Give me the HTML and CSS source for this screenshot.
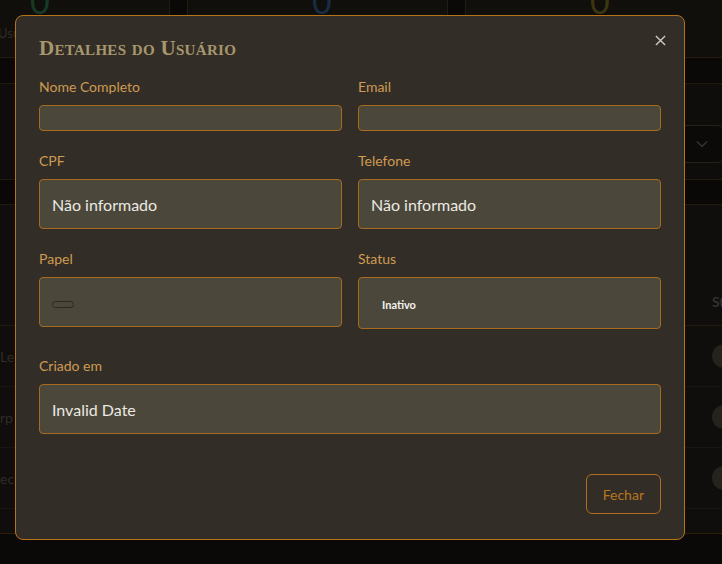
FILE: index.html
```html
<!DOCTYPE html>
<html lang="pt-BR">
<head>
<meta charset="utf-8">
<title>Detalhes do Usuário</title>
<link rel="stylesheet" href="styles.css">
</head>
<body>
<div class="page">
  <div class="stats">
    <div class="stat stat-a">
      <div class="num green">0</div>
      <div class="stat-label">Usuários</div>
    </div>
    <div class="stat stat-b">
      <div class="num blue">0</div>
    </div>
    <div class="stat stat-c">
      <div class="num olive">0</div>
    </div>
  </div>
  <div class="filters">
    <div class="select"><svg width="12" height="8" viewBox="0 0 12 8"><path d="M1 1.5l5 5 5-5" fill="none" stroke="#3a362e" stroke-width="1.4"/></svg></div>
  </div>
  <div class="band"></div>
  <div class="table">
    <div class="thead"><span class="th">Status</span></div>
    <div class="tr"><span class="td">Le</span><span class="dot"></span></div>
    <div class="tr"><span class="td">rp</span><span class="dot"></span></div>
    <div class="tr"><span class="td">ec</span><span class="dot"></span></div>
  </div>
</div>

<div class="overlay">
  <div class="modal">
    <button class="close" aria-label="Fechar">
      <svg width="12" height="12" viewBox="0 0 12 12"><path d="M1 1l10 10M11 1L1 11" stroke="#cfcac0" stroke-width="1.5" fill="none"/></svg>
    </button>
    <h2 class="title">Detalhes do Usuário</h2>
    <div class="grid">
      <div class="field">
        <label class="label">Nome Completo</label>
        <div class="box"></div>
      </div>
      <div class="field">
        <label class="label">Email</label>
        <div class="box"></div>
      </div>
      <div class="field">
        <label class="label">CPF</label>
        <div class="box">Não informado</div>
      </div>
      <div class="field">
        <label class="label">Telefone</label>
        <div class="box">Não informado</div>
      </div>
      <div class="field">
        <label class="label">Papel</label>
        <div class="box"><span class="badge badge-empty"></span></div>
      </div>
      <div class="field">
        <label class="label">Status</label>
        <div class="box"><span class="badge badge-status">Inativo</span></div>
      </div>
    </div>
    <div class="field field-wide">
      <label class="label">Criado em</label>
      <div class="box">Invalid Date</div>
    </div>
    <div class="footer">
      <button class="btn">Fechar</button>
    </div>
  </div>
</div>
</body>
</html>
```

FILE: styles.css
```css
* { box-sizing: border-box; }
html, body { margin: 0; padding: 0; }
body {
  background: #0a0908;
  font-family: Lato, "Noto Sans", sans-serif;
  width: 722px;
  height: 564px;
  overflow: hidden;
}

/* background dashboard (dimmed) */
.page { display: flex; flex-direction: column; }
.stats {
  display: flex;
  gap: 17px;
  height: 58px;
  overflow: hidden;
}
.stat {
  background: #100f0c;
  border: 1px solid #241c0e;
  border-top: none;
  display: flex;
  flex-direction: column;
}
.stat-a { width: 170px; padding-left: 30px; border-left: none; }
.stat-b { width: 261px; padding-left: 124px; }
.stat-c { flex: 1; padding-left: 124px; border-right: none; }
.num {
  font-size: 34px;
  line-height: 34px;
  margin-top: -16px;
  font-family: Lato, sans-serif;
}
.green { color: #173a26; }
.blue { color: #182c44; }
.olive { color: #3c3510; }
.stat-label {
  margin-left: -32px;
  margin-top: 7px;
  font-size: 13px;
  color: #2f2b25;
}
.filters {
  margin-top: 25px;
  height: 97px;
  background: #0e0d0b;
  border-top: 1px solid #221a0d;
  border-bottom: 1px solid #221a0d;
  display: flex;
  justify-content: flex-end;
  padding-top: 41px;
}
.select {
  width: 44px;
  height: 38px;
  margin-right: -2px;
  border: 1px solid #272118;
  border-radius: 6px;
  background: #0b0a09;
  display: flex;
  align-items: center;
  justify-content: center;
}
.band { height: 25px; background: #090807; border-bottom: 1px solid #221a0d; }
.table {
  background: #0f0e0c;
  height: 329px;
  border-bottom: 1px solid #2e1f0a;
  display: flex;
  flex-direction: column;
}
.thead {
  height: 121px;
  border-bottom: 1px solid #221a0d;
  display: flex;
  justify-content: flex-end;
  align-items: flex-end;
  padding-bottom: 15px;
}
.th {
  width: 10px;
  overflow: hidden;
  white-space: nowrap;
  font-weight: 700;
  font-size: 14px;
  color: #34312c;
}
.tr {
  height: 61px;
  border-bottom: 1px solid #1a160f;
  display: flex;
  justify-content: space-between;
  align-items: center;
}
.td { font-size: 14px; color: #2f2b25; }
.dot {
  width: 24px;
  height: 24px;
  border-radius: 50%;
  background: #26231e;
  margin-right: -14px;
}

/* modal */
.overlay {
  position: fixed;
  inset: 0;
  padding: 15px 0 0 15px;
}
.modal {
  position: relative;
  width: 670px;
  background: #322e27;
  border: 1px solid #b8721c;
  border-radius: 8px;
  padding: 20px 23px 25px;
  display: flex;
  flex-direction: column;
}
.close {
  position: absolute;
  top: 14px;
  right: 14px;
  width: 20px;
  height: 20px;
  padding: 0;
  border: none;
  background: transparent;
  display: flex;
  align-items: center;
  justify-content: center;
}
.close svg { width: 11px; height: 11px; }
.title {
  margin: 0 0 18px;
  font-family: "Liberation Serif", "DejaVu Serif", serif;
  font-variant: small-caps;
  font-weight: 700;
  font-size: 21px;
  line-height: 24px;
  letter-spacing: 0.3px;
  color: #a8966d;
}
.grid {
  display: grid;
  grid-template-columns: 1fr 1fr;
  column-gap: 16px;
  row-gap: 21px;
}
.field { display: flex; flex-direction: column; }
.field-wide { margin-top: 28px; }
.label {
  font-size: 14px;
  line-height: 17px;
  margin-bottom: 10px;
  color: #d09a52;
}
.box {
  background: #4b473b;
  border: 1px solid #a86a1c;
  border-radius: 4px;
  padding: 13px 12px 11px;
  font-size: 16px;
  line-height: 24px;
  color: #ece9e2;
  min-height: 26px;
}
.box:empty { padding: 12px; }
.badge {
  display: inline-block;
  vertical-align: baseline;
}
.badge-empty {
  width: 22px;
  height: 7px;
  margin-bottom: 1px;
  border: 1px solid #2c281f;
  border-radius: 4px;
}
.badge-status {
  padding: 0 11px;
  font-size: 11px;
  font-weight: 700;
  color: #f4f2ee;
}
.footer {
  margin-top: 40px;
  display: flex;
  justify-content: flex-end;
}
.btn {
  height: 40px;
  padding: 0 16px;
  background: transparent;
  border: 1px solid #b06e1c;
  border-radius: 6px;
  font-family: Lato, sans-serif;
  font-size: 14px;
  color: #b8761f;
}
```
